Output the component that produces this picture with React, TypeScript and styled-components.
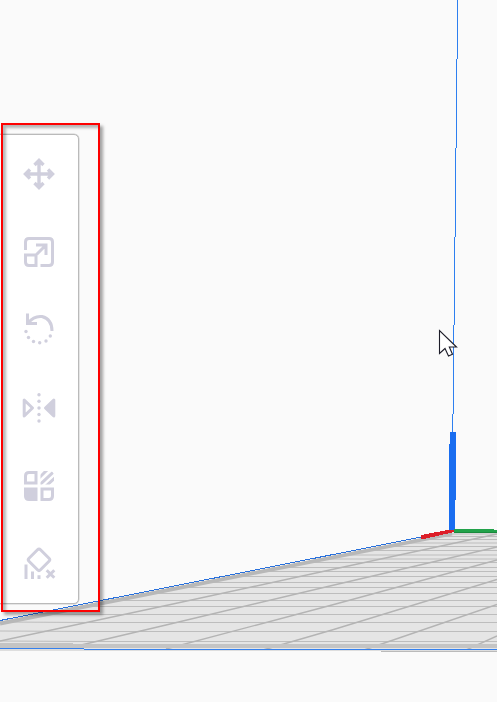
import React from "react";
import styled, { createGlobalStyle } from "styled-components";

const GlobalStyle = createGlobalStyle`
  html, body { margin: 0; background: #fafafa; overflow: hidden; }
`;

const Viewport = styled.main`
  position: relative;
  width: 497px;
  height: 702px;
  overflow: hidden;
  background: #fafafa;
  font-family: "Noto Sans", sans-serif;
`;

const Scene = styled.svg`
  position: absolute;
  inset: 0;
  display: block;
`;

const Highlight = styled.div`
  position: absolute;
  left: 1px;
  top: 123px;
  width: 99px;
  height: 489px;
  box-sizing: border-box;
  border: 2px solid #fe0000;
  box-shadow: 3px 3px 3px rgba(0, 0, 0, 0.35), inset 3px 3px 3px rgba(0, 0, 0, 0.28);
`;

const Toolbar = styled.nav`
  position: absolute;
  left: -6px;
  top: 134px;
  width: 85px;
  height: 470px;
  box-sizing: border-box;
  padding: 15px 0 0 20px;
  border: 1px solid #bababa;
  border-radius: 5px;
  box-shadow: 0 0 0 0.5px #cfcfcf;
  background: #fff;
  display: flex;
  flex-direction: column;
  gap: 30px;
`;

const Tool = styled.button`
  width: 48px;
  height: 48px;
  flex: none;
  padding: 0;
  border: 0;
  background: transparent;
  color: #d0cfdd;
  display: grid;
  place-items: center;
`;

const Icon = styled.svg`
  width: 34px;
  height: 34px;
  display: block;
  overflow: visible;
  fill: none;
  stroke: currentColor;
  stroke-width: 3;
`;

const Cursor = styled.svg`
  position: absolute;
  left: 438px;
  top: 329px;
`;

const tools = [
  {
    name: "Move",
    art: (
      <path
        d="M17 4V30M4 17H30M12.5 8 17 3.5 21.5 8M12.5 26 17 30.5 21.5 26M8 12.5 3.5 17 8 21.5M26 12.5 30.5 17 26 21.5"
        strokeWidth="3.4"
      />
    ),
  },
  {
    name: "Scale",
    art: (
      <path d="M3.5 15V7Q3.5 3.5 7 3.5H27Q30.5 3.5 30.5 7V27Q30.5 30.5 27 30.5H18.5M14 30.5H7Q3.5 30.5 3.5 27V20H14ZM14 20 24 10M14 10H24V20" />
    ),
  },
  {
    name: "Rotate",
    art: (
      <g transform="translate(0 -2)">
        <path d="M5.5 2.5V12.500H15M6 12Q12 4.500 20 5.500Q30 8 30 20" />
        <g fill="currentColor" stroke="none">
          <circle cx="4" cy="20.500" r="1.700" />
          <circle cx="6.500" cy="26.500" r="1.700" />
          <circle cx="11.500" cy="30.500" r="1.700" />
          <circle cx="17.700" cy="31.800" r="1.700" />
          <circle cx="24" cy="30" r="1.700" />
          <circle cx="28.300" cy="25" r="1.700" />
        </g>
      </g>
    ),
  },
  {
    name: "Mirror",
    art: (
      <>
        <path d="M2.200 9V25L10.500 17Z" strokeLinejoin="round" />
        <path d="M31.800 9V25L23.500 17Z" fill="currentColor" strokeLinejoin="round" />
        <g fill="currentColor" stroke="none">
          {[3.8, 10.3, 17, 23.5, 30].map((y) => (
            <circle key={y} cx="17" cy={y} r="1.700" />
          ))}
        </g>
      </>
    ),
  },
  {
    name: "Per model settings",
    art: (
      <>
        <clipPath id="hatch">
          <path d="M18.500 2H27Q32 2 32 7V15.500H18.500Z" />
        </clipPath>
        <path d="M7 3.500H14V14H3.500V7Q3.500 3.500 7 3.500ZM20 20H30.500V27Q30.500 30.500 27 30.500H20Z" />
        <path d="M2 18.500H15.500V32H7Q2 32 2 27Z" fill="currentColor" stroke="none" />
        <path d="M15 11 27 -1M16 17.500 34 0.500M23 18 35 7" strokeWidth="3" clipPath="url(#hatch)" />
      </>
    ),
  },
  {
    name: "Support blocker",
    art: (
      <g transform="translate(0 -1.5)">
        <path d="M15.500 4.300Q17 2.800 18.500 4.300L27 12.800Q28.500 14.300 27 15.800L18.500 24.300Q17 25.800 15.500 24.300L7 15.800Q5.500 14.300 7 12.800Z" />
        <path d="M4 19V33.500M10.500 26V33.500M17 29.700V33.500M24.700 24.700 32.300 32.300M32.300 24.700 24.700 32.300" />
      </g>
    ),
  },
];

const rows = [
  534, 536.5, 539.5, 543, 546.5, 550.5, 555, 559, 562.5, 567.5, 571.5, 576.5, 582.5, 587.5,
  593.5, 600.5, 606.5, 614.5, 622.5, 631.5, 641.5,
];

const columns = [
  "0,641 166,605.5 332,569.5 497,534",
  "60,650 166,625 332,585.5 497,547",
  "166,649 332,605 497,560",
  "263,650 332,630 497,579.5",
  "364,650 497,604.5",
  "464,651 497,636",
];

export default function App() {
  return (
    <>
      <GlobalStyle />
      <Viewport>
        <Scene width="497" height="702" viewBox="0 0 497 702">
          <defs>
            <clipPath id="plate">
              <path d="M0 621 452 532H497V651H0Z" />
            </clipPath>
          </defs>
          <g clipPath="url(#plate)">
            <path d="M0 621 452 532H497V651H0Z" fill="#e5e5e5" />
            {rows.map((y) => (
              <path key={y} d={`M0 ${y - 0.5}L90 ${y}H497`} fill="none" stroke="#bdbdbd" strokeWidth="1.2" />
            ))}
            {columns.map((points) => (
              <polyline key={points} points={points} fill="none" stroke="#b4b4b4" strokeWidth="1.4" />
            ))}
            <path d="M0 643H73V644H497V648H0Z" fill="#c4c4c4" />
            <path d="M0 623.500 452 533.500" stroke="#b8b8b8" strokeWidth="4" />
          </g>
          <path d="M0 649H84V650H497V651H0Z" fill="#dedede" />
          <g shapeRendering="crispEdges">
            <path d="M0 620.500 424 536.500" stroke="#2870dc" />
            <path d="M0 648H84V649H0Z M84 649H497V650H84Z" fill="#3480ee" />
            <path d="M381 651H497V652H381Z" fill="#bababa" />
            <path
              d="M457 0h1v59h-1zM456 59h1v89h-1zM455 148h1v89h-1zM454 237h1v88h-1zM453 325h1v89h-1zM452 414h1v18h-1z"
              fill="#2d7ff0"
            />
            <path d="M450 432H456V500H455V531H449V444H450Z" fill="#196df0" />
            <path d="M421 535 448 530H454V532L424 539H421Z" fill="#dc1e28" />
            <path d="M454 529H494V530H497V532H454Z" fill="#22a24a" />
            <path d="M454 532H497V533H454Z" fill="#198a3c" />
          </g>
        </Scene>
        <Toolbar aria-label="Model tools">
          {tools.map(({ name, art }) => (
            <Tool key={name} aria-label={name}>
              <Icon viewBox="0 0 34 34">{art}</Icon>
            </Tool>
          ))}
        </Toolbar>
        <Highlight />
        <Cursor width="20" height="30" viewBox="0 0 20 30">
          <path
            d="M1.500 1.500V24.500L7 19.500 10.500 27 14.500 25.300 11.300 18H18.500Z"
            fill="#fff"
            stroke="#1c1c28"
            strokeWidth="1.100"
          />
        </Cursor>
      </Viewport>
    </>
  );
}
